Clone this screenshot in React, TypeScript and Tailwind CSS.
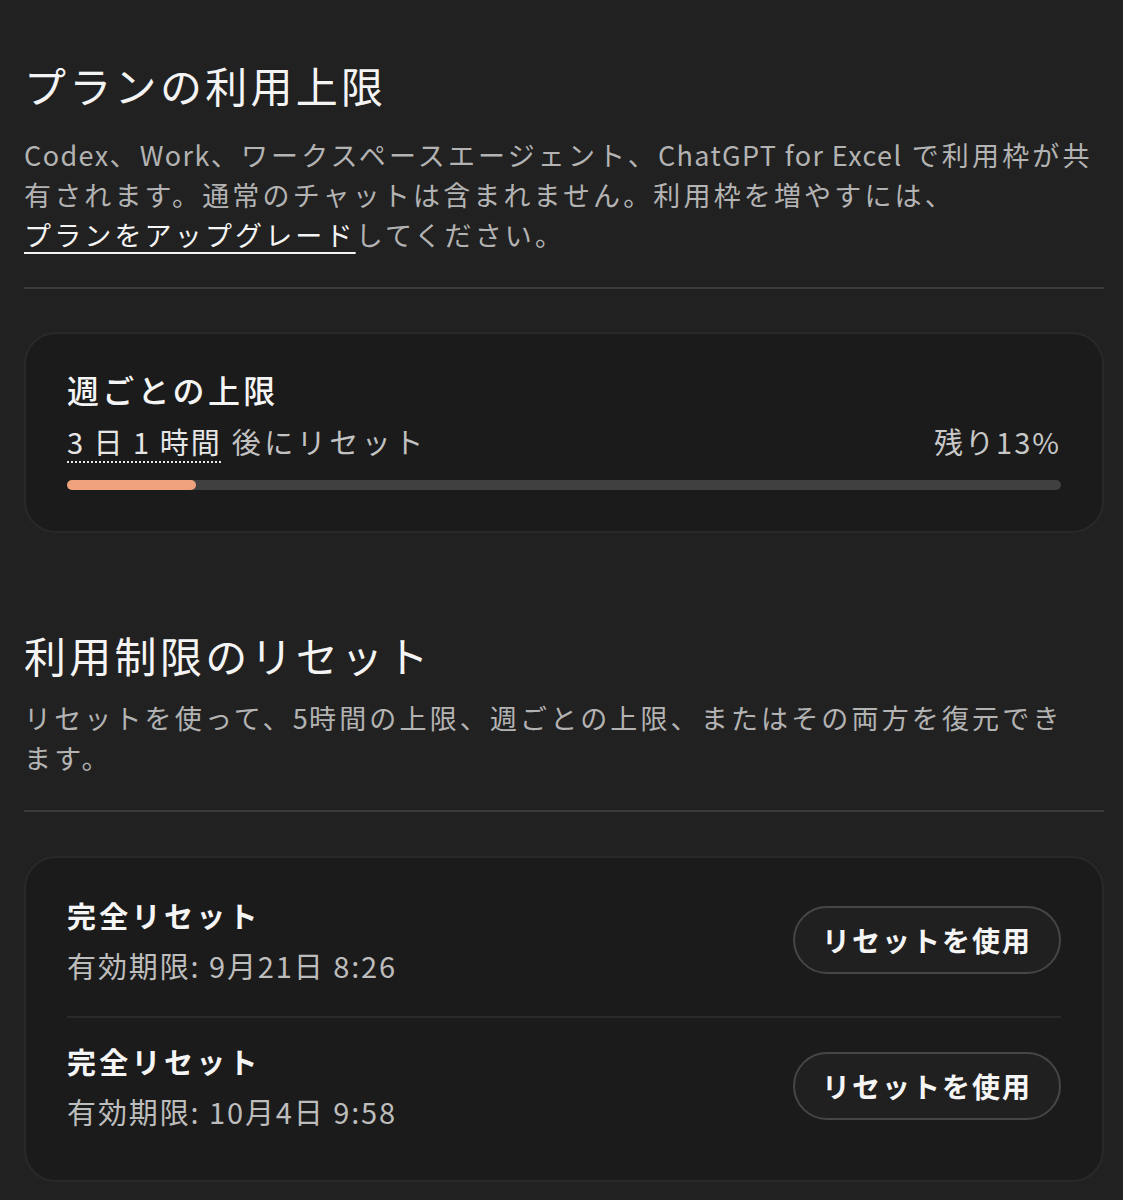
import clsx from 'clsx'

const FONT = 'font-["Noto_Sans_CJK_JP","Noto_Sans",sans-serif]'

const resets = [
  { title: '完全リセット', expires: '有効期限: 9月21日 8:26' },
  { title: '完全リセット', expires: '有効期限: 10月4日 9:58' },
]

function Latin({ children }: { children: React.ReactNode }) {
  return <span className="tracking-[1.4px]">{children}</span>
}

function SectionHeader({ title, descGap, children }: { title: string; descGap: string; children: React.ReactNode }) {
  return (
    <div>
      <h1 className="text-[42px] leading-[56px] font-normal tracking-[3.3px] text-[#f4f4f4]">{title}</h1>
      <p className={clsx('text-[27px] leading-[40px] tracking-[3.15px] text-[#b3b3b3]', descGap)}>{children}</p>
      <div className="mt-[32px] h-[2px] bg-[#3a3a3a]" />
    </div>
  )
}

function WeeklyCard() {
  const remaining = 13
  return (
    <div className="mt-[43px] rounded-[32px] border-2 border-[#292929] bg-[#1b1b1b] px-[41px] pt-[33px] pb-[41px]">
      <h2 className="text-[32px] leading-[44px] font-medium tracking-[3.3px] text-[#f5f5f5]">週ごとの上限</h2>
      <div className="mt-[10px] flex items-center justify-between text-[29px] leading-[40px]">
        <span className="tracking-[3.5px] text-[#c2c2c2]">
          <span className="tracking-[2px] text-[#e6e6e6] underline decoration-dotted decoration-2 underline-offset-[7px]">
            3 日 1 時間
          </span>{' '}
          後にリセット
        </span>
        <span className="tracking-[2px] text-[#c8c8c8]">残り{remaining}%</span>
      </div>
      <div className="mt-[19px] h-[10px] w-full rounded-full bg-[#404040]">
        <div className="h-full rounded-full bg-[#f0a27c]" style={{ width: `${remaining}%` }} />
      </div>
    </div>
  )
}

function ResetsCard() {
  return (
    <div className="mt-[44px] rounded-[32px] border-2 border-[#292929] bg-[#1b1b1b] px-[41px] pt-[14px] pb-[18px]">
      {resets.map((r, i) => (
        <div
          key={i}
          className={clsx('flex items-center justify-between pt-[23px] pb-[31px]', i > 0 && 'border-t-2 border-[#2a2a2a]')}
        >
          <div>
            <div className="text-[29px] leading-[40px] font-semibold tracking-[3.3px] text-[#f5f5f5]">{r.title}</div>
            <div className="mt-[10px] text-[29px] leading-[40px] tracking-[1.9px] text-[#bdbdbd]">{r.expires}</div>
          </div>
          <button className="h-[68px] rounded-full border-2 border-[#464646] bg-[#202020] px-[27px] text-[28px] font-semibold tracking-[2px] text-[#f5f5f5]">
            リセットを使用
          </button>
        </div>
      ))}
    </div>
  )
}

export default function App() {
  return (
    <div className={clsx('min-h-[1200px] bg-[#212121] pl-[24px] pr-[19px] pt-[57px] pb-[20px]', FONT)}>
      <SectionHeader title="プランの利用上限" descGap="mt-[22px]">
        <Latin>Codex</Latin>、<Latin>Work</Latin>、ワークスペースエージェント、<Latin>ChatGPT for Excel</Latin>{' '}
        で利用枠が共有されます。通常のチャットは含まれません。利用枠を増やすには、
        <a className="whitespace-nowrap text-[#f4f4f4] underline decoration-2 underline-offset-[6px]">
          プランをアップグレード
        </a>
        してください。
      </SectionHeader>
      <WeeklyCard />
      <div className="mt-[94px]">
        <SectionHeader title="利用制限のリセット" descGap="mt-[15px]">
          リセットを使って、<Latin>5</Latin>時間の上限、週ごとの上限、またはその両方を復元でき
          <span className="whitespace-nowrap">ます。</span>
        </SectionHeader>
      </div>
      <ResetsCard />
    </div>
  )
}
